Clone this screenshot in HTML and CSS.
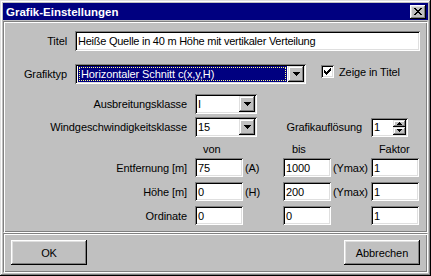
FILE: index.html
```html
<!DOCTYPE html>
<html lang="de">
<head>
<meta charset="utf-8">
<title>Grafik-Einstellungen</title>
<link rel="stylesheet" href="styles.css">
</head>
<body>
<div class="window">
  <div class="titlebar">
    <span class="title">Grafik-Einstellungen</span>
    <div class="close">
      <svg width="8" height="7" viewBox="0 0 8 7" shape-rendering="crispEdges"><path d="M0 0h2v1H0z M6 0h2v1H6z M1 1h2v1H1z M5 1h2v1H5z M2 2h4v1H2z M3 3h2v1H3z M2 4h4v1H2z M1 5h2v1H1z M5 5h2v1H5z M0 6h2v1H0z M6 6h2v1H6z" fill="#000"/></svg>
    </div>
  </div>

  <div class="panel main">
    <div class="row r-titel">
      <span class="lbl lbl-top">Titel</span>
      <div class="edit grow">Heiße Quelle in 40 m Höhe mit vertikaler Verteilung</div>
    </div>

    <div class="row r-typ">
      <span class="lbl lbl-top">Grafiktyp</span>
      <div class="combo combo-typ">
        <div class="combo-val selected"><span class="focus">Horizontaler Schnitt c(x,y,H)</span></div>
        <div class="drop"><svg width="7" height="4" viewBox="0 0 7 4" shape-rendering="crispEdges"><path d="M0 0h7v1H0z M1 1h5v1H1z M2 2h3v1H2z M3 3h1v1H3z" fill="#000"/></svg></div>
      </div>
      <div class="checkgroup">
        <div class="check"><svg width="7" height="7" viewBox="0 0 7 7" shape-rendering="crispEdges"><path d="M6 0h1v1h-1z M5 1h2v1h-2z M0 2h1v1h-1z M4 2h3v1h-3z M0 3h2v1h-2z M3 3h3v1h-3z M0 4h5v1h-5z M1 5h3v1h-3z M2 6h1v1h-1z" fill="#000"/></svg></div>
        <span>Zeige in Titel</span>
      </div>
    </div>

    <div class="grid r-ausb">
      <span class="lbl">Ausbreitungsklasse</span>
      <div class="combo combo-small">
        <div class="combo-val">I</div>
        <div class="drop"><svg width="7" height="4" viewBox="0 0 7 4" shape-rendering="crispEdges"><path d="M0 0h7v1H0z M1 1h5v1H1z M2 2h3v1H2z M3 3h1v1H3z" fill="#000"/></svg></div>
      </div>
    </div>

    <div class="grid r-wind">
      <span class="lbl">Windgeschwindigkeitsklasse</span>
      <div class="combo combo-small">
        <div class="combo-val">15</div>
        <div class="drop"><svg width="7" height="4" viewBox="0 0 7 4" shape-rendering="crispEdges"><path d="M0 0h7v1H0z M1 1h5v1H1z M2 2h3v1H2z M3 3h1v1H3z" fill="#000"/></svg></div>
      </div>
      <span class="lbl lbl-res">Grafikauflösung</span>
      <div class="spin">
        <div class="spin-val">1</div>
        <div class="spin-btns">
          <div class="spin-btn up"><svg width="5" height="3" viewBox="0 0 5 3" shape-rendering="crispEdges"><path d="M2 0h1v1H2z M1 1h3v1H1z M0 2h5v1H0z" fill="#000"/></svg></div>
          <div class="spin-btn down"><svg width="5" height="3" viewBox="0 0 5 3" shape-rendering="crispEdges"><path d="M0 0h5v1H0z M1 1h3v1H1z M2 2h1v1H2z" fill="#000"/></svg></div>
        </div>
      </div>
    </div>

    <div class="grid r-head">
      <span></span>
      <span class="head">von</span>
      <span></span>
      <span class="head">bis</span>
      <span></span>
      <span class="head">Faktor</span>
    </div>

    <div class="grid r-data first">
      <span class="lbl">Entfernung [m]</span>
      <div class="edit">75</div>
      <span class="unit">(A)</span>
      <div class="edit">1000</div>
      <span class="unit">(Ymax)</span>
      <div class="edit">1</div>
    </div>

    <div class="grid r-data">
      <span class="lbl">Höhe [m]</span>
      <div class="edit">0</div>
      <span class="unit">(H)</span>
      <div class="edit">200</div>
      <span class="unit">(Ymax)</span>
      <div class="edit">1</div>
    </div>

    <div class="grid r-data">
      <span class="lbl">Ordinate</span>
      <div class="edit">0</div>
      <span class="unit"></span>
      <div class="edit">0</div>
      <span class="unit"></span>
      <div class="edit">1</div>
    </div>
  </div>

  <div class="panel buttons">
    <div class="btn">OK</div>
    <div class="btn">Abbrechen</div>
  </div>
</div>
</body>
</html>
```

FILE: styles.css
```css
* { box-sizing: border-box; }
html, body { margin: 0; padding: 0; }
body {
  font-family: "Liberation Sans", Arial, sans-serif;
  font-size: 11px;
  letter-spacing: -0.1px;
  color: #000;
  background: #c0c0c0;
}

.window {
  width: 431px;
  height: 276px;
  background: #c0c0c0;
  padding: 3px;
  display: flex;
  flex-direction: column;
  box-shadow: inset -1px -1px 0 #000, inset 1px 1px 0 #dfdfdf,
              inset -2px -2px 0 #808080, inset 2px 2px 0 #fff;
}

.titlebar {
  flex: none;
  height: 17px;
  background: #000080;
  color: #fff;
  display: flex;
  align-items: center;
  justify-content: space-between;
  padding: 0 2px 0 3px;
}
.title { font-weight: bold; font-size: 11.5px; letter-spacing: 0; }

.close {
  width: 16px;
  height: 14px;
  background: #c0c0c0;
  display: flex;
  align-items: center;
  justify-content: center;
  box-shadow: inset -1px -1px 0 #000, inset 1px 1px 0 #fff,
              inset -2px -2px 0 #808080, inset 2px 2px 0 #dfdfdf;
}

.panel {
  border: 1px solid;
  border-color: #808080 #fff #fff #808080;
  box-shadow: inset 1px 1px 0 #fff, inset -1px -1px 0 #808080;
}

.main {
  flex: none;
  margin-top: 1px;
  height: 212px;
  padding: 9px 7px 0 0;
  display: flex;
  flex-direction: column;
}

.row { display: flex; align-items: center; }
.lbl { text-align: right; white-space: nowrap; }
.lbl-top { width: 63px; margin-right: 8px; flex: none; }
.grow { flex: 1; }

.r-titel { height: 20px; }
.r-typ { height: 20px; margin-top: 13px; }

.grid {
  display: grid;
  grid-template-columns: 191px 48px 40px 48px 40px 48px;
  align-items: center;
}
.grid > .lbl:first-child { padding-right: 8px; }
.r-ausb { height: 20px; margin-top: 10px; }
.r-wind { height: 20px; margin-top: 3px; }
.r-head { height: 13px; margin-top: 6px; line-height: 13px; }
.r-data { height: 19px; margin-top: 5px; }
.r-data.first { margin-top: 2px; }

.head { padding-left: 8px; }
.r-head .head:nth-child(4) { padding-left: 9px; }
.unit { padding-left: 2px; white-space: nowrap; }

.edit {
  height: 19px;
  background: #fff;
  padding: 0 3px;
  display: flex;
  align-items: center;
  white-space: nowrap;
  overflow: hidden;
  box-shadow: inset 1px 1px 0 #808080, inset -1px -1px 0 #fff,
              inset 2px 2px 0 #000, inset -2px -2px 0 #dfdfdf;
}
.r-titel .edit { height: 20px; letter-spacing: -0.25px; }

.combo {
  height: 20px;
  background: #fff;
  padding: 2px;
  display: flex;
  box-shadow: inset 1px 1px 0 #808080, inset -1px -1px 0 #fff,
              inset 2px 2px 0 #000, inset -2px -2px 0 #dfdfdf;
}
.combo-typ { width: 231px; flex: none; }
.combo-small { width: 62px; }
.combo-val {
  flex: 1;
  display: flex;
  align-items: center;
  padding-left: 1px;
  white-space: nowrap;
}
.combo-val.selected {
  margin: 0 1px 0 1px;
  padding: 1px;
  background: #000080;
  color: #fff;
}
.focus {
  display: flex;
  align-items: center;
  width: 100%;
  height: 100%;
  padding-left: 1px;
  border: 1px dotted #ffff80;
}
.drop {
  width: 16px;
  height: 16px;
  background: #c0c0c0;
  display: flex;
  align-items: center;
  justify-content: center;
  box-shadow: inset -1px -1px 0 #000, inset 1px 1px 0 #dfdfdf,
              inset -2px -2px 0 #808080, inset 2px 2px 0 #fff;
}

.checkgroup {
  display: flex;
  align-items: center;
  align-self: flex-start;
  margin-top: 1px;
  margin-left: 15px;
  gap: 5px;
}
.check {
  width: 13px;
  height: 13px;
  background: #fff;
  display: flex;
  align-items: center;
  justify-content: center;
  box-shadow: inset 1px 1px 0 #808080, inset -1px -1px 0 #fff,
              inset 2px 2px 0 #000, inset -2px -2px 0 #dfdfdf;
}

.lbl-res { grid-column: 4 / 6; padding-right: 9px; }
.spin {
  grid-column: 6;
  width: 37px;
  height: 19px;
  background: #fff;
  padding: 2px;
  display: flex;
  box-shadow: inset 1px 1px 0 #808080, inset -1px -1px 0 #fff,
              inset 2px 2px 0 #000, inset -2px -2px 0 #dfdfdf;
}
.spin-val { flex: 1; display: flex; align-items: center; padding-left: 1px; }
.spin-btns { width: 13px; display: flex; flex-direction: column; }
.spin-btn {
  flex: 1;
  background: #c0c0c0;
  display: flex;
  align-items: center;
  justify-content: center;
  box-shadow: inset -1px -1px 0 #000, inset 1px 1px 0 #dfdfdf,
              inset -2px -2px 0 #808080, inset 2px 2px 0 #fff;
}

.buttons {
  flex: none;
  height: 40px;
  padding: 6px 7px;
  display: flex;
  justify-content: space-between;
  align-items: flex-start;
}
.btn {
  width: 76px;
  height: 25px;
  background: #c0c0c0;
  display: flex;
  align-items: center;
  justify-content: center;
  box-shadow: inset -1px -1px 0 #000, inset 1px 1px 0 #fff,
              inset -2px -2px 0 #808080, inset 2px 2px 0 #dfdfdf;
}
```
